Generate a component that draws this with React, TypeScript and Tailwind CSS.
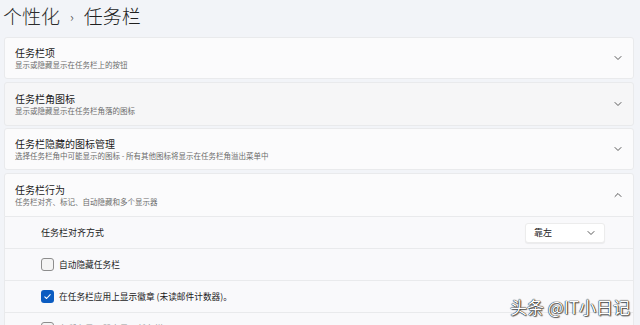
import React from "react";

const font = { fontFamily: '"Noto Sans CJK SC", "Noto Sans", sans-serif' };

function Down() {
  return (
    <svg width="10" height="10" viewBox="0 0 10 10" className="text-[#5a5a5a]">
      <path d="M2 3.5 L5 6.5 L8 3.5" fill="none" stroke="currentColor" strokeWidth="1" strokeLinecap="round" strokeLinejoin="round" />
    </svg>
  );
}
function Up() {
  return (
    <svg width="10" height="10" viewBox="0 0 10 10" className="text-[#5a5a5a]">
      <path d="M2 6.5 L5 3.5 L8 6.5" fill="none" stroke="currentColor" strokeWidth="1" strokeLinecap="round" strokeLinejoin="round" />
    </svg>
  );
}

function Card({ title, sub, bg = "bg-[#fbfbfc]", h = "h-[42px]" }: { title: string; sub: string; bg?: string; h?: string }) {
  return (
    <div className={`${bg} ${h} rounded-[3px] border border-[#e9eaec] flex items-center pl-[10px] pr-[10px]`}>
      <div className="flex-1 flex flex-col">
        <div className="text-[10px] leading-[12px] text-[#1b1b1b]">{title}</div>
        <div className="text-[7.5px] leading-[11px] text-[#6b6b6b]">{sub}</div>
      </div>
      <Down />
    </div>
  );
}

function Box({ checked }: { checked?: boolean }) {
  return checked ? (
    <div className="w-[13px] h-[13px] rounded-[3px] bg-[#0b5cc1] flex items-center justify-center">
      <svg width="9" height="9" viewBox="0 0 9 9">
        <path d="M1.8 4.8 L3.6 6.5 L7.2 2.6" fill="none" stroke="white" strokeWidth="1.1" strokeLinecap="round" strokeLinejoin="round" />
      </svg>
    </div>
  ) : (
    <div className="w-[13px] h-[13px] rounded-[3px] border border-[#8d8d8d] bg-[#f4f4f4]" />
  );
}

export default function App() {
  return (
    <div style={font} className="w-[640px] h-[325px] bg-[#f2f4f8] overflow-hidden relative">
      <div className="flex items-center h-[32px] pl-[3px] pt-[1px] text-[19px] font-light text-[#1f1f1f] gap-[10px]">
        <span className="text-[#2b2b2b]">个性化</span>
        <span className="text-[13px] text-[#444]">›</span>
        <span>任务栏</span>
      </div>
      <div className="flex flex-col pl-[4px] pr-[6px] pt-[5px]">
        <Card title="任务栏项" sub="显示或隐藏显示在任务栏上的按钮" />
        <div className="h-[3px]" />
        <Card title="任务栏角图标" sub="显示或隐藏显示在任务栏角落的图标" bg="bg-[#f6f6f7]" h="h-[44px]" />
        <div className="h-[2px]" />
        <Card title="任务栏隐藏的图标管理" sub="选择任务栏角中可能显示的图标 - 所有其他图标将显示在任务栏角溢出菜单中" />
        <div className="h-[3px]" />
        <div className="flex flex-col">
          <div className="bg-[#fbfbfc] h-[44px] rounded-t-[3px] border border-[#e9eaec] flex items-center pl-[10px] pr-[10px]">
            <div className="flex-1 flex flex-col">
              <div className="text-[10px] leading-[12px] text-[#1b1b1b]">任务栏行为</div>
              <div className="text-[7.5px] leading-[11px] text-[#6b6b6b]">任务栏对齐、标记、自动隐藏和多个显示器</div>
            </div>
            <Up />
          </div>
          <div className="bg-[#f9f9fb] h-[32px] border-x border-b border-[#e9eaec] flex items-center pl-[36px] pr-[28px]">
            <div className="flex-1 text-[9px] text-[#1b1b1b]">任务栏对齐方式</div>
            <div className="w-[80px] h-[20px] bg-white rounded-[3px] border border-[#ececec] shadow-[0_1px_1px_rgba(0,0,0,0.06)] flex items-center pl-[8px] pr-[8px]">
              <span className="flex-1 text-[9px] text-[#1b1b1b]">靠左</span>
              <Down />
            </div>
          </div>
          <div className="bg-[#f9f9fb] h-[32px] border-x border-b border-[#e9eaec] flex items-center pl-[36px] gap-[5px]">
            <Box />
            <span className="text-[8.7px] text-[#1b1b1b]">自动隐藏任务栏</span>
          </div>
          <div className="bg-[#f9f9fb] h-[32px] border-x border-b border-[#e9eaec] flex items-center pl-[36px] gap-[5px]">
            <Box checked />
            <span className="text-[8.7px] text-[#1b1b1b]">在任务栏应用上显示徽章 (未读邮件计数器)。</span>
          </div>
          <div className="bg-[#f9f9fb] h-[32px] border-x border-b border-[#e9eaec] flex items-center pl-[36px] gap-[5px]">
            <Box />
            <span className="text-[8.7px] text-[#9a9a9a]">在所有显示器上显示任务栏</span>
          </div>
        </div>
      </div>
      <div
        className="absolute right-[10px] top-[297px] text-[17px] leading-[20px] text-white"
        style={{ textShadow: "0 0 1px #000, 0 0 1px #000, 1px 1px 1px rgba(0,0,0,0.6)" }}
      >
        头条 @IT小日记
      </div>
    </div>
  );
}
